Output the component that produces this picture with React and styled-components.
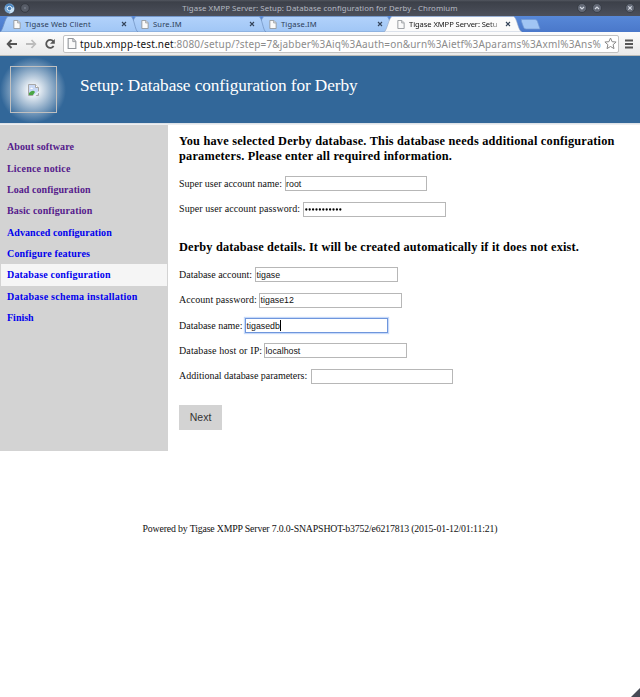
import React from "react";
import styled, { createGlobalStyle } from "styled-components";

const ui = '"Noto Sans", "Open Sans", sans-serif';
const serif = '"Liberation Serif", "Times New Roman", serif';

const GlobalStyle = createGlobalStyle`
  * { box-sizing: border-box; }
  body { margin: 0; background: #fff; overflow: hidden; }
`;

const Window = styled.div`
  position: relative;
  width: 640px;
  height: 697px;
  background: #fff;
  overflow: hidden;
  white-space: nowrap;
`;

const TitleBar = styled.header`
  height: 16px;
  display: grid;
  grid-template-columns: 60px 1fr 60px;
  align-items: center;
  background: linear-gradient(#52565f 0, #3c4049 2px, #4c505b 100%);
`;

const TitleIcons = styled.div`
  display: flex;
  align-items: center;
  gap: 5px;
  padding-left: ${(p) => p.$left || 0}px;
`;

const WindowButtons = styled(TitleIcons)`
  margin-left: -3px;
`;

const CloseSlot = styled.div`
  display: flex;
  margin-left: 18px;
`;

const TitleText = styled.div`
  text-align: center;
  font: 7.8px/14px ${ui};
  color: #b5b9c2;
  letter-spacing: 0.08px;
`;

const Tabs = styled.nav`
  position: relative;
  height: 16px;
  display: flex;
  background: linear-gradient(#5788d8, #4a78ca);
`;

const TabShapes = styled.svg`
  position: absolute;
  inset: 0;
`;

const Tab = styled.div`
  position: relative;
  width: 128px;
  height: 16px;
  display: flex;
  align-items: center;
  padding-left: 13px;
`;

const TabLabel = styled.span`
  width: 96px;
  margin-left: 4px;
  font: 7.6px/16px ${ui};
  color: ${(p) => (p.$active ? "#161616" : "#2c3d57")};
  letter-spacing: ${(p) => (p.$active ? -0.08 : 0.15)}px;
  ${(p) => p.$active && "mask-image: linear-gradient(90deg, #000 84%, transparent 98%);"}
`;

const Toolbar = styled.div`
  height: 24px;
  display: flex;
  align-items: center;
  background: linear-gradient(#fcfcfc, #e9e9e9);
  border-bottom: 1px solid #bcbcb8;
`;

const NavButtons = styled.div`
  width: 63px;
  display: flex;
  gap: 7px;
  padding-left: 6px;
`;

const AddressBar = styled.div`
  width: 556px;
  height: 18px;
  display: flex;
  align-items: center;
  padding-left: 3px;
  background: #fff;
  border: 1px solid #c2c2c2;
  border-radius: 2px;
`;

const Url = styled.span`
  width: 524px;
  margin-left: 3px;
  font: 10px/16px ${ui};
  color: #8b8b8b;
  letter-spacing: 0.17px;
`;

const Host = styled.span`
  color: #111;
`;

const MenuIcon = styled.svg`
  margin-left: 5px;
`;

const PageHeader = styled.header`
  height: 67px;
  display: flex;
  background: radial-gradient(circle at 33px 34px, #fff 0, #e9eff5 6px, #326799 33px);
`;

const Logo = styled.div`
  width: 47px;
  height: 47px;
  margin: 10px 0 0 10px;
  display: flex;
  align-items: center;
  justify-content: center;
  border: 1px solid #c0c0c0;
`;

const PageTitle = styled.h1`
  margin: 19px 0 0 23px;
  font: 17.25px/22px ${serif};
  letter-spacing: -0.08px;
  color: #fff;
`;

const HeaderEdge = styled.div`
  height: 2px;
  background: linear-gradient(#d5dce3, #f5f5f5);
`;

const Columns = styled.div`
  display: flex;
  height: 326px;
`;

const Sidebar = styled.aside`
  width: 168px;
  padding: 11.4px 1px 0;
  background: #d3d3d3;
`;

const SideLink = styled.div`
  height: 21.33px;
  padding-left: 6px;
  font: bold 10px/21.3px ${serif};
  letter-spacing: ${(p) => p.$spacing}px;
  color: ${(p) => (p.$visited ? "#551a8b" : "#0000ee")};
  background: ${(p) => (p.$current ? "#f5f5f5" : "transparent")};
`;

const Main = styled.main`
  padding: 9px 0 0 11px;
`;

const Heading = styled.h2`
  height: 37.3px;
  margin: 0;
  font: bold 12.3px/15.2px ${serif};
  color: #000;
  letter-spacing: 0.21px;
`;

const DetailsHeading = styled(Heading)`
  height: 22px;
  margin-top: 18px;
  letter-spacing: 0.175px;
`;

const Field = styled.label`
  height: 25.4px;
  display: flex;
  align-items: center;
  font: 10px/14px ${serif};
  color: #111;
`;

const FieldName = styled.span`
  width: ${(p) => p.$width}px;
  letter-spacing: ${(p) => p.$spacing || 0}px;
`;

const Input = styled.span`
  width: 142.5px;
  height: 15px;
  display: flex;
  align-items: center;
  background: #fff;
  border: 1px solid ${(p) => (p.$focused ? "#6f96dc" : "#b7b7b7")};
  box-shadow: ${(p) => (p.$focused ? "0 0 1px 1px #c7dafa" : "none")};
  font: 8.8px/12px "Liberation Sans", Arial, sans-serif;
  padding-left: 0.6px;
`;

const Dots = styled.svg`
  margin-left: 0.5px;
`;

const Caret = styled.span`
  width: 1px;
  height: 11px;
  background: #000;
`;

const NextButton = styled.div`
  width: 43px;
  height: 24.5px;
  margin-top: 16px;
  background: #d3d3d3;
  text-align: center;
  font: 10.5px/24px "Liberation Sans", Arial, sans-serif;
  color: #333;
`;

const Footer = styled.footer`
  margin-top: 71px;
  text-align: center;
  font: 9.8px/14px ${serif};
  letter-spacing: -0.155px;
  color: #111;
`;

const Grip = styled.svg`
  position: absolute;
  right: 0;
  bottom: 0;
`;

const PageIcon = ({ size = 9 }) => (
  <svg width={size - 1} height={size} viewBox="0 0 8 10">
    <path d="M.5.5h4.4l2.6 2.6v6.4h-7z" fill="#fafafa" stroke="#92969b" />
    <path d="M4.7.7v2.6h2.6" fill="#ddd" stroke="#92969b" strokeWidth=".8" />
  </svg>
);

const CloseIcon = () => (
  <svg width="6" height="6" viewBox="0 0 6 6">
    <path d="M1 1l4 4M5 1L1 5" stroke="#34445a" strokeWidth="1.1" />
  </svg>
);

const WindowButton = ({ d }) => (
  <svg width="10" height="10" viewBox="0 0 10 10">
    <circle cx="5" cy="5" r="4.5" fill="#646a77" stroke="#343840" strokeWidth=".8" />
    <path d={d} fill="none" stroke="#d5dae3" strokeWidth="1.2" />
  </svg>
);

const tabShape = (x) => `M${x} 16C${x + 3} 15 ${x + 5} 1 ${x + 8} .5H${x + 131}C${x + 134} 1 ${x + 135} 15 ${x + 138} 16Z`;

const tabs = [
  { name: "Tigase Web Client" },
  { name: "Sure.IM" },
  { name: "Tigase.IM" },
  { name: "Tigase XMPP Server: Setu", active: true },
];

const links = [
  { name: "About software", visited: true, spacing: 0.1 },
  { name: "Licence notice", visited: true, spacing: 0.2 },
  { name: "Load configuration", visited: true, spacing: 0.06 },
  { name: "Basic configuration", visited: true, spacing: 0.12 },
  { name: "Advanced configuration", spacing: 0.08 },
  { name: "Configure features", spacing: 0.18 },
  { name: "Database configuration", spacing: 0.18, current: true },
  { name: "Database schema installation", spacing: 0.24 },
  { name: "Finish", spacing: 0 },
];

const TextField = ({ name, width, spacing, value, focused, children }) => (
  <Field>
    <FieldName $width={width} $spacing={spacing}>{name}</FieldName>
    <Input $focused={focused}>{value}{children}{focused && <Caret />}</Input>
  </Field>
);

export default function App() {
  return (
    <>
      <GlobalStyle />
      <Window>
        <TitleBar>
          <TitleIcons $left={4}>
            <svg width="11" height="11" viewBox="0 0 11 11">
              <circle cx="5.5" cy="5.5" r="5" fill="#78a9d8" />
              <path d="M1 3Q5-2 10 4H6Z" fill="#4c83bb" />
              <path d="M10 4Q11 10 5 10.5L7.5 6Z" fill="#c9e2f6" />
              <circle cx="5.5" cy="5.5" r="2.2" fill="#417db9" stroke="#e8f2fa" />
            </svg>
            <svg width="10" height="10" viewBox="0 0 10 10">
              <circle cx="5" cy="5" r="4.3" fill="#575c67" stroke="#363a42" />
              <circle cx="5" cy="5" r="1" fill="#747b87" />
            </svg>
          </TitleIcons>
          <TitleText>Tigase XMPP Server: Setup: Database configuration for Derby - Chromium</TitleText>
          <WindowButtons>
            <WindowButton d="M3 4l2 2 2-2" />
            <WindowButton d="M3 6l2-2 2 2" />
            <CloseSlot><WindowButton d="M3.3 3.3l3.4 3.4M6.7 3.3L3.3 6.7" /></CloseSlot>
          </WindowButtons>
        </TitleBar>
        <Tabs>
          <TabShapes width="640" height="16" viewBox="0 0 640 16">
            <defs>
              <linearGradient id="tab" x2="0" y2="1">
                <stop stopColor="#b2d2fb" />
                <stop offset="1" stopColor="#a0c6f5" />
              </linearGradient>
            </defs>
            {[256, 128, 0].map((x) => (
              <path key={x} d={tabShape(x)} fill="url(#tab)" stroke="#6f8fbd" strokeWidth=".7" />
            ))}
            <path d="M384 16C387 15 389 1 392 .5H513.5C517 1 518 15 522 16Z" fill="#fbfbfb" stroke="#90a4c2" strokeWidth=".6" />
            <path d="M521 3.5h14q2 0 2.5 2l2.5 7.5h-14q-2 0-2.5-2l-2-5.5q-.5-2 .5-2z" fill="#a1c5f4" stroke="#7399d2" strokeWidth=".7" />
          </TabShapes>
          {tabs.map((tab) => (
            <Tab key={tab.name}>
              <PageIcon />
              <TabLabel $active={tab.active}>{tab.name}</TabLabel>
              <CloseIcon />
            </Tab>
          ))}
        </Tabs>
        <Toolbar>
          <NavButtons>
            <svg width="12" height="12" viewBox="0 0 12 12"><path d="M11 6H2M5.5 2L1.7 6l3.8 4" fill="none" stroke="#555" strokeWidth="1.9" /></svg>
            <svg width="12" height="12" viewBox="0 0 12 12"><path d="M1 6h9M6.5 2l3.8 4-3.8 4" fill="none" stroke="#bcbcbc" strokeWidth="1.8" /></svg>
            <svg width="12" height="12" viewBox="0 0 12 12"><path d="M9.3 3.3A4 4 0 1 0 9.6 8" fill="none" stroke="#555" strokeWidth="1.8" /><path d="M10.8 1v4.8H6z" fill="#555" /></svg>
          </NavButtons>
          <AddressBar>
            <PageIcon size={11} />
            <Url><Host>tpub.xmpp-test.net</Host>:8080/setup/?step=7&amp;jabber%3Aiq%3Aauth=on&amp;urn%3Aietf%3Aparams%3Axml%3Ans%</Url>
            <svg width="13" height="13" viewBox="0 0 13 13"><path d="M6.5 1l1.6 3.7 4 .3-3 2.7.9 3.9-3.5-2.1L3 11.6l.9-3.9L.9 5l4-.3z" fill="#fff" stroke="#888" /></svg>
          </AddressBar>
          <MenuIcon width="10" height="10" viewBox="0 0 10 10"><path d="M1 1.5h8M1 5h8M1 8.5h8" stroke="#555" strokeWidth="2" /></MenuIcon>
        </Toolbar>
        <PageHeader>
          <Logo>
            <svg width="11" height="12" viewBox="0 0 11 12">
              <path d="M.5.5h7l3 3v8H.5z" fill="#c8d9f6" stroke="#a7a7a7" />
              <path d="M7.5.5v3h3" fill="#fff" stroke="#a7a7a7" />
              <path d="M2 5q2-3 3 0z" fill="#fff" />
              <path d="M1 11V9q4-4 6-1l-2 3z" fill="#4ba644" />
              <path d="M4.5 12l6.5-5v1.5L7.5 12z" fill="#edf2f7" />
            </svg>
          </Logo>
          <PageTitle>Setup: Database configuration for Derby</PageTitle>
        </PageHeader>
        <HeaderEdge />
        <Columns>
          <Sidebar>
            {links.map((link) => (
              <SideLink key={link.name} $visited={link.visited} $current={link.current} $spacing={link.spacing}>{link.name}</SideLink>
            ))}
          </Sidebar>
          <Main>
            <Heading>You have selected Derby database. This database needs additional configuration<br />parameters. Please enter all required information.</Heading>
            <TextField name="Super user account name:" width={105.5} value="root" />
            <TextField name="Super user account password:" width={124} spacing={0.07}>
              <Dots width="38" height="3" viewBox="0 0 38 3">
                {Array.from({ length: 11 }, (_, i) => <circle key={i} cx={1.3 + i * 3.4} cy="1.5" r="1.15" />)}
              </Dots>
            </TextField>
            <DetailsHeading>Derby database details. It will be created automatically if it does not exist.</DetailsHeading>
            <TextField name="Database account:" width={76} value="tigase" />
            <TextField name="Account password:" width={80} spacing={0.05} value="tigase12" />
            <TextField name="Database name:" width={66} value="tigasedb" focused />
            <TextField name="Database host or IP:" width={85} spacing={0.12} value="localhost" />
            <TextField name="Additional database parameters:" width={131.5} spacing={-0.02} value="" />
            <NextButton>Next</NextButton>
          </Main>
        </Columns>
        <Footer>Powered by Tigase XMPP Server 7.0.0-SNAPSHOT-b3752/e6217813 (2015-01-12/01:11:21)</Footer>
        <Grip width="9" height="9" viewBox="0 0 9 9"><path d="M9 0v9H0z" fill="#464a55" /></Grip>
      </Window>
    </>
  );
}
